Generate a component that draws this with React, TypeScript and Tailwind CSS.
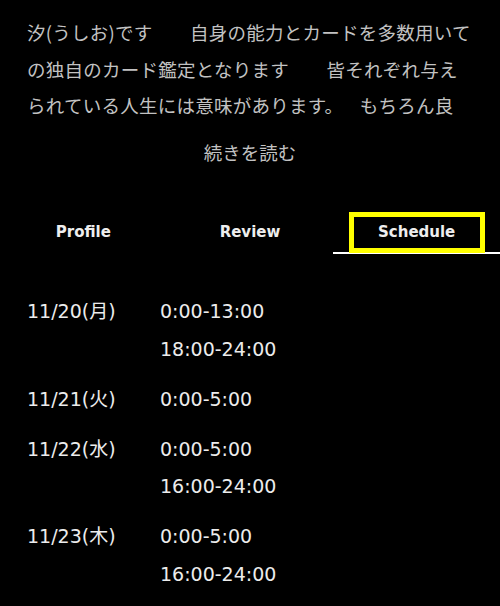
import React from 'react';

const jp = "font-['Noto_Sans_CJK_JP',sans-serif]";
const latin = "font-['DejaVu_Sans','Noto_Sans_CJK_JP',sans-serif]";

const schedule: { date: string; times: string[] }[] = [
  { date: '11/20(月)', times: ['0:00-13:00', '18:00-24:00'] },
  { date: '11/21(火)', times: ['0:00-5:00'] },
  { date: '11/22(水)', times: ['0:00-5:00', '16:00-24:00'] },
  { date: '11/23(木)', times: ['0:00-5:00', '16:00-24:00'] },
];

const tabs = ['Profile', 'Review', 'Schedule'];

export default function App() {
  const active = 'Schedule';

  return (
    <div className="w-[500px] h-[606px] overflow-hidden bg-black">
      {/* intro, clamped to three lines */}
      <div className={`${jp} px-[27px] pt-[14px] text-[18.5px] leading-[36.5px] text-[#c2c2c2] whitespace-nowrap`}>
        <p className="tracking-[0.25px]">
          汐(うしお)です　　自身の能力とカードを多数用いて<br />
          の独自のカード鑑定となります　　皆それぞれ与え<br />
          られている人生には意味があります。　<span className="inline-block w-[7px]" />もちろん良
        </p>
        <button className="block w-full mt-[10px] text-center text-[18.5px] leading-[36.5px] text-[#c2c2c2]">
          続きを読む
        </button>
      </div>

      {/* tabs */}
      <nav className="mt-[42px] grid grid-cols-3 font-['DejaVu_Sans',sans-serif] font-bold text-[15px] text-[#eeeeee]">
        {tabs.map((t) => (
          <div
            key={t}
            className={`relative h-[42px] flex items-center justify-center ${
              t === active ? 'border-b-2 border-white' : 'border-b-2 border-transparent'
            }`}
          >
            {t}
            {t === active && (
              <span className="absolute left-[16px] right-[15px] top-0 bottom-[-1px] border-[5px] border-[#ffff00]" />
            )}
          </div>
        ))}
      </nav>

      {/* schedule list */}
      <div className={`${latin} mt-[39px] px-[27px] text-[19px] leading-[37.5px] text-[#ececec]`}>
        {schedule.map((d) => (
          <div key={d.date} className="flex mb-[12.5px]">
            <div className="w-[133px]">{d.date}</div>
            <div className="flex flex-col">
              {d.times.map((tm) => (
                <span key={tm}>{tm}</span>
              ))}
            </div>
          </div>
        ))}
      </div>
    </div>
  );
}
